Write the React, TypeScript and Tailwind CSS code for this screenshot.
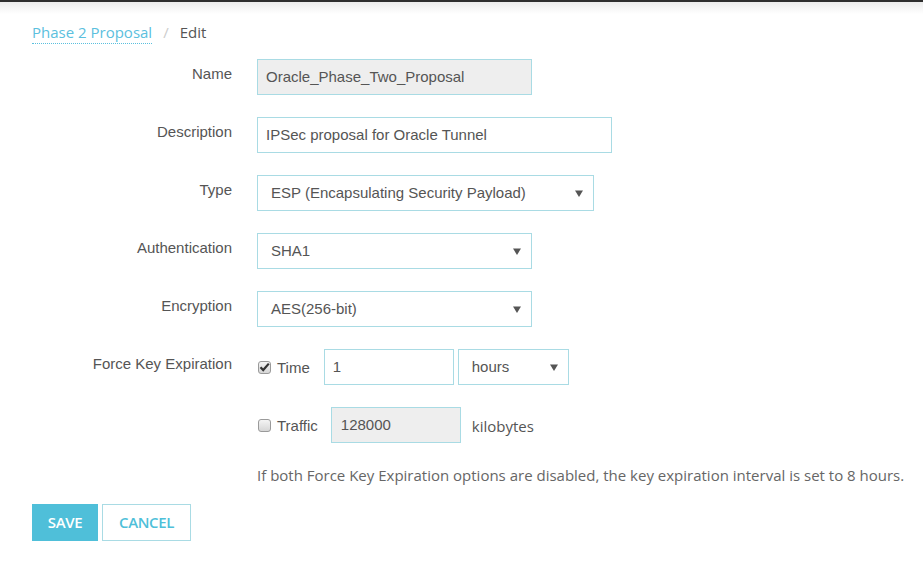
import { useState } from 'react';

const arial = { fontFamily: '"Liberation Sans", Arial, sans-serif' };

function Caret() {
  return (
    <svg width="8" height="7" viewBox="0 0 8 7" className="shrink-0">
      <path d="M0 0.5 L8 0.5 L4 7 Z" fill="#555" />
    </svg>
  );
}

function SelectBox({ value, width }: { value: string; width: string }) {
  return (
    <div className={`${width} h-[36px] border border-[#a9dbe4] bg-white flex items-center justify-between pl-[13px] pr-[10px] text-[15px] text-[#555]`}>
      <span>{value}</span>
      <Caret />
    </div>
  );
}

function Check({ checked }: { checked: boolean }) {
  return (
    <span className="w-[13px] h-[13px] rounded-[3px] border border-[#9a9a9a] bg-gradient-to-b from-[#f4f4f4] to-[#d6d6d6] flex items-center justify-center shrink-0">
      {checked && (
        <svg width="11" height="10" viewBox="0 0 11 10">
          <path d="M1.5 5.2 L4.2 8 L9.8 1.6" stroke="#333" strokeWidth="2.2" fill="none" />
        </svg>
      )}
    </span>
  );
}

function Row({ label, children }: { label: string; children: React.ReactNode }) {
  return (
    <div className="flex items-start mb-[22px]">
      <div className="w-[232px] text-right pt-[5px] leading-[20px] text-[15px] text-[#555]">{label}</div>
      <div className="ml-[25px] flex items-center">{children}</div>
    </div>
  );
}

export default function App() {
  const [time, setTime] = useState(true);
  const [traffic, setTraffic] = useState(false);

  return (
    <div className="w-[923px] h-[571px] bg-white relative overflow-hidden">
      {/* top edge */}
      <div className="h-[2px] bg-[#2e2e2e]" />
      <div className="h-[12px] bg-gradient-to-b from-[#ececec] to-white" />

      <div className="px-[32px] pt-[7px] flex items-center gap-[11px] text-[15px]" style={{ fontFamily: '"Open Sans", sans-serif' }}>
        <span className="text-[#5bc0de] border-b border-dotted border-[#5bc0de] leading-[22px]">Phase 2 Proposal</span>
        <span className="text-[#ccc]">/</span>
        <span className="text-[#555]">Edit</span>
      </div>

      <div className="pt-[15px]" style={arial}>
        <Row label="Name">
          <div className="w-[275px] h-[36px] border border-[#a9dbe4] bg-[#eeeeee] flex items-center pl-[8px] text-[15px] text-[#555]">
            Oracle_Phase_Two_Proposal
          </div>
        </Row>
        <Row label="Description">
          <div className="w-[355px] h-[36px] border border-[#a9dbe4] bg-white flex items-center pl-[8px] text-[15px] text-[#555]">
            IPSec proposal for Oracle Tunnel
          </div>
        </Row>
        <Row label="Type">
          <SelectBox value="ESP (Encapsulating Security Payload)" width="w-[337px]" />
        </Row>
        <Row label="Authentication">
          <SelectBox value="SHA1" width="w-[275px]" />
        </Row>
        <Row label="Encryption">
          <SelectBox value="AES(256-bit)" width="w-[275px]" />
        </Row>
        <Row label="Force Key Expiration">
          <label className="flex items-center gap-[6px] pl-[1px] text-[15px] text-[#555] cursor-pointer" onClick={() => setTime(!time)}>
            <Check checked={time} />
            <span className="pt-[2px]">Time</span>
          </label>
          <div className="ml-[14px] w-[130px] h-[36px] border border-[#a9dbe4] bg-white flex items-center pl-[8px] text-[15px] text-[#555]">
            1
          </div>
          <div className="ml-[4px]">
            <SelectBox value="hours" width="w-[111px]" />
          </div>
        </Row>
        <Row label="">
          <label className="flex items-center gap-[6px] pl-[1px] text-[15px] text-[#555] cursor-pointer" onClick={() => setTraffic(!traffic)}>
            <Check checked={traffic} />
            <span className="pt-[2px]">Traffic</span>
          </label>
          <div className="ml-[13px] w-[130px] h-[36px] border border-[#a9dbe4] bg-[#eeeeee] flex items-center pl-[9px] text-[15px] text-[#555]">
            128000
          </div>
          <span className="ml-[11px] text-[15px] text-[#555] pt-[2px]" style={{ fontFamily: '"Open Sans", sans-serif' }}>kilobytes</span>
        </Row>
      </div>

      <div style={{ fontFamily: '"Open Sans", sans-serif' }}>
        <p className="pl-[257px] mt-[2px] text-[15px] text-[#666] leading-[20px]">
          If both Force Key Expiration options are disabled, the key expiration interval is set to 8 hours.
        </p>
        <div className="pl-[32px] mt-[19px] flex gap-[4px]">
          <button className="w-[66px] h-[37px] bg-[#4fbfd9] text-white text-[15px] font-semibold tracking-[-0.4px]">SAVE</button>
          <button className="w-[89px] h-[37px] border border-[#a9dbe4] bg-white text-[#4fbfd9] text-[15px] font-semibold tracking-[-0.4px]">CANCEL</button>
        </div>
      </div>
    </div>
  );
}
